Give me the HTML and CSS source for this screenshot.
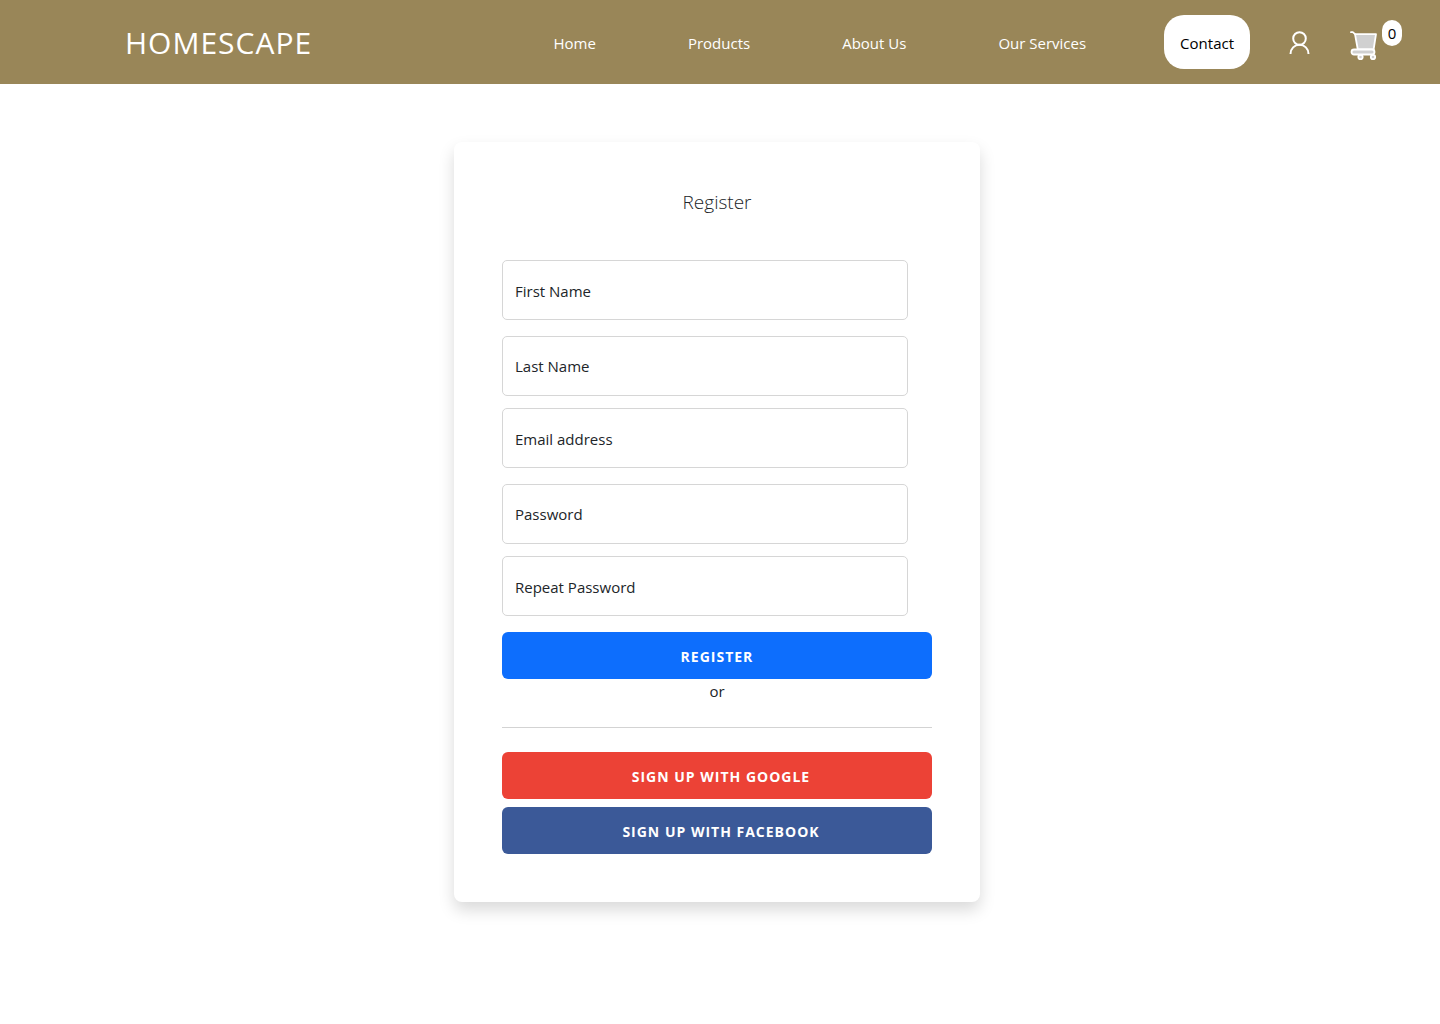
FILE: index.html
```html
<!DOCTYPE html>
<html lang="en">
<head>
<meta charset="utf-8">
<meta name="viewport" content="width=device-width, initial-scale=1">
<title>Homescape – Register</title>
<link rel="stylesheet" href="styles.css">
</head>
<body>
<header class="navbar">
  <a class="brand" href="#">HOMESCAPE</a>
  <nav class="nav">
    <a href="#">Home</a>
    <a href="#">Products</a>
    <a href="#">About Us</a>
    <a href="#">Our Services</a>
  </nav>
  <a class="contact" href="#">Contact</a>
  <a class="account" href="#" aria-label="Account">
    <svg width="22" height="24" viewBox="0 0 22 24" fill="none" stroke="#fff" stroke-width="2"><circle cx="10.500" cy="8.500" r="6.300"/><path d="M1.500 24C1.500 18.500 5.500 14.800 10.500 14.800s9 3.700 9 9.200"/></svg>
  </a>
  <a class="cart" href="#" aria-label="Cart">
    <svg class="cart-icon" width="28" height="30" viewBox="0 0 28 30" fill="#d0d0d0" stroke="#fff" stroke-width="1.800" stroke-linecap="round" stroke-linejoin="round"><path d="M5 3.200h21L23.600 18.500H7.800z"/><path d="M1 1.200h1.800L5 3.200" fill="none"/><circle cx="10.500" cy="26" r="2.200"/><circle cx="23" cy="26" r="2.200"/><rect x="1.500" y="18.500" width="23" height="5" rx="2.500"/></svg>
    <span class="count">0</span>
  </a>
</header>
<main class="page">
  <form class="card">
    <h1 class="title">Register</h1>
    <div class="fields">
      <label class="field"><span class="label">First Name</span><input class="input" type="text"></label>
      <label class="field"><span class="label">Last Name</span><input class="input" type="text"></label>
      <label class="field"><span class="label">Email address</span><input class="input" type="email"></label>
      <label class="field"><span class="label">Password</span><input class="input" type="password"></label>
      <label class="field"><span class="label">Repeat Password</span><input class="input" type="password"></label>
    </div>
    <button class="button primary" type="submit">REGISTER</button>
    <p class="or">or</p>
    <hr class="rule">
    <div class="social">
      <button class="button google" type="button">SIGN UP WITH GOOGLE</button>
      <button class="button facebook" type="button">SIGN UP WITH FACEBOOK</button>
    </div>
  </form>
</main>
</body>
</html>
```
FILE: styles.css
```css
* { box-sizing: border-box; }
body { margin: 0; background: #fff; color: #212529; font: 15px/24px "Open Sans", "Noto Sans", sans-serif; }
a { color: inherit; text-decoration: none; }
.navbar { display: flex; align-items: center; min-height: 84px; padding: 0 38px 0 125px; background: #998658; color: #fff; }
.brand { padding-top: 2px; font-size: 30px; line-height: 40px; letter-spacing: 1px; }
.nav { display: flex; gap: 92px; margin-left: auto; padding-top: 2px; }
.contact { margin-left: 78px; padding: 16px 16px 14px; border-radius: 20px; background: #fff; color: #000; }
.account { display: flex; margin-left: 39px; }
.cart { display: flex; align-items: flex-start; min-height: 44px; margin-left: 39px; }
.cart-icon { margin-top: 11px; }
.count { width: 20px; height: 26px; margin-left: 4px; border-radius: 10px; background: #fff; color: #000; line-height: 26px; text-align: center; }
.page { display: flex; justify-content: center; padding: 58px 30px 58px 24px; }
.card { width: 100%; max-width: 526px; padding: 48px; border-radius: 8px; background: #fff; box-shadow: 0 8px 16px rgba(0, 0, 0, .15); }
.title { margin: 0 0 46px; font-size: 19px; line-height: 24px; font-weight: 300; text-align: center; }
.fields { margin: 0 24px 16px 0; }
.field { display: grid; height: 60px; }
.field:nth-child(even) { margin: 16px 0 12px; }
.label { grid-area: 1 / 1; align-self: center; padding: 0 13px; z-index: 1; pointer-events: none; }
.field:nth-child(odd) .label { padding-top: 2px; }
.input { grid-area: 1 / 1; width: 100%; height: 60px; padding: 0 12px; border: 1px solid #d6d6d6; border-radius: 5px; background: #fff; font: inherit; }
.button { display: block; width: 100%; height: 47px; padding: 2px 0 0; border: 0; border-radius: 6px; color: #fff; font: 700 14px/20px "Open Sans", "Noto Sans", sans-serif; letter-spacing: 1px; }
.primary { background: #0d6efd; }
.google { background: #ec4236; }
.facebook { background: #3b5998; }
.or { margin: 0; text-align: center; }
.rule { margin: 24px 0; border: 0; border-top: 1px solid #d3d3d3; }
.social { display: grid; gap: 8px; }
.social .button { padding-left: 8px; }
```
